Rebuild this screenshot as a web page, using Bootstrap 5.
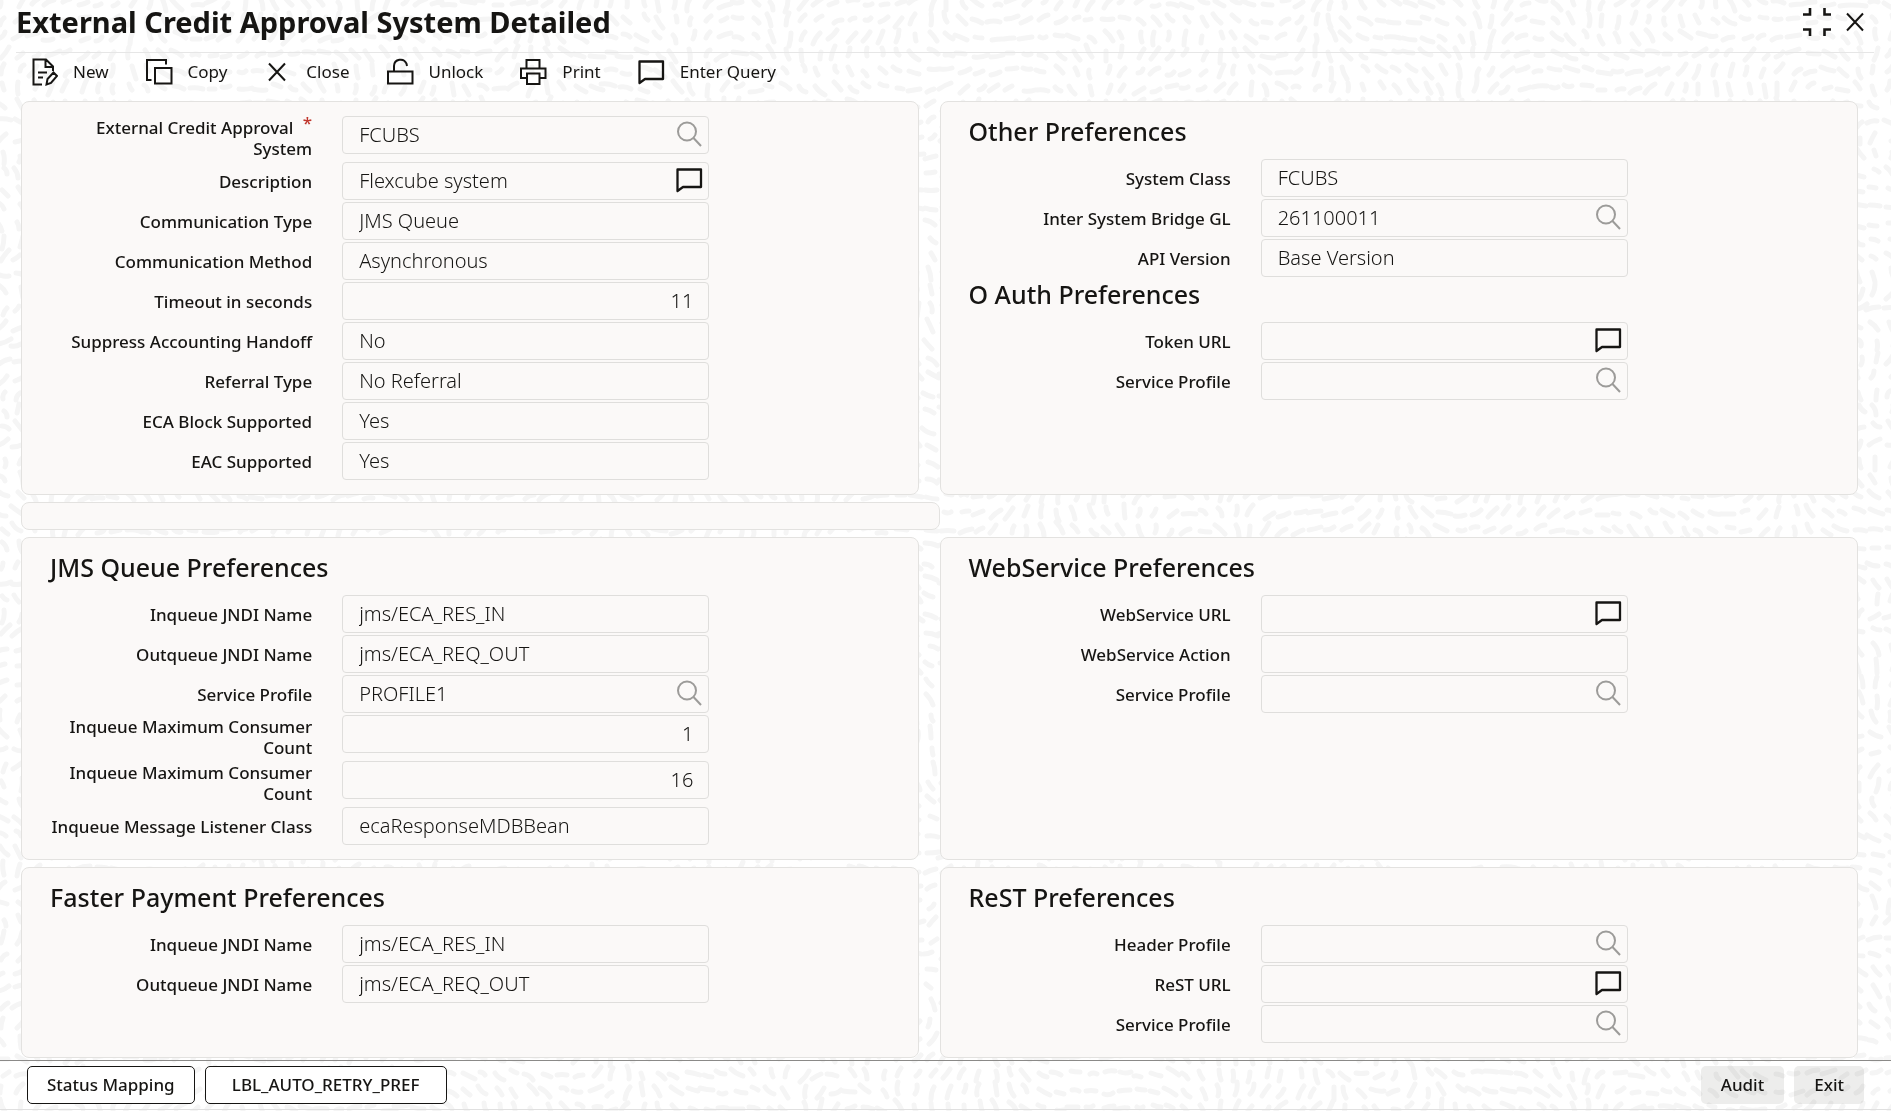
<!DOCTYPE html>
<html lang="en">
<head>
<meta charset="utf-8">
<meta name="viewport" content="width=device-width, initial-scale=1">
<title>External Credit Approval System Detailed</title>
<link href="https://cdn.jsdelivr.net/npm/bootstrap@5.3.0/dist/css/bootstrap.min.css" rel="stylesheet">
<style>
  :root { --ink: #161513; --edge: #e3e2e0; --panel: #fbf9f8; }
  body { font-family: "Noto Sans", "Open Sans", sans-serif; font-size: 17px; font-weight: 500; line-height: 21px; color: var(--ink); background: #fff; }
  .backdrop { position: fixed; top: 0; left: 0; width: 100%; height: 100%; z-index: -1; }
  .ico { width: 28px; height: 28px; fill: none; stroke: currentColor; stroke-width: 2; flex: none; display: block; }
  .bare { border: 0; background: none; padding: 0; color: inherit; }
  .screen-head { height: 53px; margin: 0 17px 0 16px; border-bottom: 1px solid #e6e6e6; padding-bottom: 8px; }
  .screen-head h1 { font-size: 29px; font-weight: 700; line-height: 36px; margin: 0; }
  .window-tools { gap: 10px; padding-right: 5px; }
  .tools { height: 37px; margin: 0 30px 11px; gap: 36px; }
  .tools .bare { display: flex; align-items: center; gap: 15px; }
  .content-area { padding: 0 33px 0 21px; }
  .band { margin-bottom: 7px; }
  .band:last-child { margin-bottom: 0; }
  .panel-box { height: 100%; background: var(--panel); border: 1px solid var(--edge); border-radius: 8px; padding: 14px 0 12px; }
  .panel-box.inset { margin-right: 21px; }
  .panel-box h2 { font-size: 25px; font-weight: 480; line-height: 30px; margin: 0 28px 13px; }
  .panel-strip { height: 28px; padding: 0; }
  .field-line { display: grid; grid-template-columns: 320fr 367fr 229fr; padding-bottom: 2px; align-items: start; }
  .inset .field-line { grid-template-columns: 320fr 367fr 208fr; }
  .field-line label { display: flex; align-items: center; justify-content: flex-end; min-height: 38px; padding: 1px 30px 1px 24px; text-align: right; }
  .req { color: #c0362c; padding-left: 5px; position: relative; top: -5px; }
  .field-box { position: relative; }
  .field-box .form-control { height: 38px; border: 1px solid #dfdedc; border-radius: 4px; background: transparent; padding: 0 16px 1px; font-size: 20px; font-weight: 350; line-height: 26px; color: var(--ink); }
  .field-box .num { text-align: right; padding-right: 15px; }
  .field-box .bare { position: absolute; right: 6px; top: 4px; }
  .find { color: #9c9b99; }
  .foot { margin-top: auto; margin-bottom: 1px; border-top: 1px solid #8b8a88; border-bottom: 1px solid #e0e0e0; padding: 5px 27px; }
  .foot-group { gap: 10px; }
  .foot .btn { height: 38px; padding: 0 19px 2px; font-size: 17px; font-weight: 500; line-height: 21px; border-radius: 5px; color: var(--ink); }
  .btn-line { border: 1px solid var(--ink); background: #fff; }
  .foot .btn-wide { min-width: 242px; }
  .foot .btn-soft { border: 0; padding: 0 20px 2px; background: rgba(22,21,19,.08); }
</style>
</head>
<body class="d-flex flex-column min-vh-100">
<svg class="backdrop" aria-hidden="true"><path id="dashes" fill="none" stroke="#f5f5f5" stroke-width="5" stroke-linecap="round"/></svg>
<svg width="0" height="0" class="d-none">
  <symbol id="i-new" viewBox="0 0 28 28"><path d="M12 26.500H3.500V1.500h12.500l7 7V13M15.500 1.500v7.500h7.500M8 14.500h9M8 19.500h5M16.500 26.500l1-5.500 6-6.500 3.500 3.500-6 7z"/></symbol>
  <symbol id="i-copy" viewBox="0 0 28 28"><path d="M6.500 22H2V2h19v4.500M10 10h16.500v15.500H10z"/></symbol>
  <symbol id="i-x" viewBox="0 0 28 28"><path d="M6 5.500l16 17M22 5.500l-16 17"/></symbol>
  <symbol id="i-unlock" viewBox="0 0 28 28"><path d="M2 13.500h24.500v12H2zM8 13.500V8a6.500 6.500 0 0 1 12.500-2.300l.5 2.300"/></symbol>
  <symbol id="i-print" viewBox="0 0 28 28"><path d="M7.500 10V2h13v8M7 20H2V10.500h24.500V20H21M8 15.500h12.500V26H8z"/></symbol>
  <symbol id="i-note" viewBox="0 0 28 28"><path stroke-width="2.300" stroke-linejoin="round" d="M2.500 3.500h23.500v17.500H8L2.500 25z"/></symbol>
  <symbol id="i-find" viewBox="0 0 28 28"><circle cx="12" cy="11.500" r="9"/><path d="M18.500 18l7.500 8"/></symbol>
  <symbol id="i-min" viewBox="0 0 28 28"><path stroke-width="2.600" d="M0 6.500h7V0M28 6.500h-6.500V0M0 21.500h7V28M28 21.500h-6.500V28"/></symbol>
</svg>

<header class="screen-head d-flex align-items-center justify-content-between">
  <h1>External Credit Approval System Detailed</h1>
  <div class="window-tools d-flex align-items-center">
    <button class="bare" type="button" aria-label="Restore"><svg class="ico"><use href="#i-min"/></svg></button>
    <button class="bare" type="button" aria-label="Close window"><svg class="ico"><use href="#i-x"/></svg></button>
  </div>
</header>

<nav class="tools d-flex align-items-center" aria-label="Actions">
  <button class="bare" type="button"><svg class="ico"><use href="#i-new"/></svg>New</button>
  <button class="bare" type="button"><svg class="ico"><use href="#i-copy"/></svg>Copy</button>
  <button class="bare" type="button"><svg class="ico"><use href="#i-x"/></svg>Close</button>
  <button class="bare" type="button"><svg class="ico"><use href="#i-unlock"/></svg>Unlock</button>
  <button class="bare" type="button"><svg class="ico"><use href="#i-print"/></svg>Print</button>
  <button class="bare" type="button"><svg class="ico"><use href="#i-note"/></svg>Enter Query</button>
</nav>

<main class="content-area">
  <div class="row g-0 band">
    <div class="col-6"><section class="panel-box inset">
      <div class="field-line"><label for="sys"><span>External Credit Approval <span class="req">*</span> System</span></label><div class="field-box"><input class="form-control" id="sys" value="FCUBS" readonly><button class="bare find" type="button" aria-label="Search system"><svg class="ico"><use href="#i-find"/></svg></button></div></div>
      <div class="field-line"><label for="desc">Description</label><div class="field-box"><input class="form-control" id="desc" value="Flexcube system" readonly><button class="bare" type="button" aria-label="Show description"><svg class="ico"><use href="#i-note"/></svg></button></div></div>
      <div class="field-line"><label for="ctype">Communication Type</label><div class="field-box"><input class="form-control" id="ctype" value="JMS Queue" readonly></div></div>
      <div class="field-line"><label for="cmeth">Communication Method</label><div class="field-box"><input class="form-control" id="cmeth" value="Asynchronous" readonly></div></div>
      <div class="field-line"><label for="tout">Timeout in seconds</label><div class="field-box"><input class="form-control num" id="tout" value="11" readonly></div></div>
      <div class="field-line"><label for="supp">Suppress Accounting Handoff</label><div class="field-box"><input class="form-control" id="supp" value="No" readonly></div></div>
      <div class="field-line"><label for="ref">Referral Type</label><div class="field-box"><input class="form-control" id="ref" value="No Referral" readonly></div></div>
      <div class="field-line"><label for="eca">ECA Block Supported</label><div class="field-box"><input class="form-control" id="eca" value="Yes" readonly></div></div>
      <div class="field-line"><label for="eac">EAC Supported</label><div class="field-box"><input class="form-control" id="eac" value="Yes" readonly></div></div>
    </section></div>
    <div class="col-6"><section class="panel-box">
      <h2>Other Preferences</h2>
      <div class="field-line"><label for="scls">System Class</label><div class="field-box"><input class="form-control" id="scls" value="FCUBS" readonly></div></div>
      <div class="field-line"><label for="gl">Inter System Bridge GL</label><div class="field-box"><input class="form-control" id="gl" value="261100011" readonly><button class="bare find" type="button" aria-label="Search GL"><svg class="ico"><use href="#i-find"/></svg></button></div></div>
      <div class="field-line"><label for="api">API Version</label><div class="field-box"><input class="form-control" id="api" value="Base Version" readonly></div></div>
      <h2>O Auth Preferences</h2>
      <div class="field-line"><label for="tok">Token URL</label><div class="field-box"><input class="form-control" id="tok" readonly><button class="bare" type="button" aria-label="Show token URL"><svg class="ico"><use href="#i-note"/></svg></button></div></div>
      <div class="field-line"><label for="osp">Service Profile</label><div class="field-box"><input class="form-control" id="osp" readonly><button class="bare find" type="button" aria-label="Search profile"><svg class="ico"><use href="#i-find"/></svg></button></div></div>
    </section></div>
  </div>
  <div class="row g-0 band"><div class="col-6"><div class="panel-box panel-strip"></div></div></div>
  <div class="row g-0 band">
    <div class="col-6"><section class="panel-box inset">
      <h2>JMS Queue Preferences</h2>
      <div class="field-line"><label for="jin">Inqueue JNDI Name</label><div class="field-box"><input class="form-control" id="jin" value="jms/ECA_RES_IN" readonly></div></div>
      <div class="field-line"><label for="jout">Outqueue JNDI Name</label><div class="field-box"><input class="form-control" id="jout" value="jms/ECA_REQ_OUT" readonly></div></div>
      <div class="field-line"><label for="jsp">Service Profile</label><div class="field-box"><input class="form-control" id="jsp" value="PROFILE1" readonly><button class="bare find" type="button" aria-label="Search profile"><svg class="ico"><use href="#i-find"/></svg></button></div></div>
      <div class="field-line"><label for="mx1">Inqueue Maximum Consumer Count</label><div class="field-box"><input class="form-control num" id="mx1" value="1" readonly></div></div>
      <div class="field-line"><label for="mx2">Inqueue Maximum Consumer Count</label><div class="field-box"><input class="form-control num" id="mx2" value="16" readonly></div></div>
      <div class="field-line"><label for="lst">Inqueue Message Listener Class</label><div class="field-box"><input class="form-control" id="lst" value="ecaResponseMDBBean" readonly></div></div>
    </section></div>
    <div class="col-6"><section class="panel-box">
      <h2>WebService Preferences</h2>
      <div class="field-line"><label for="wurl">WebService URL</label><div class="field-box"><input class="form-control" id="wurl" readonly><button class="bare" type="button" aria-label="Show WebService URL"><svg class="ico"><use href="#i-note"/></svg></button></div></div>
      <div class="field-line"><label for="wact">WebService Action</label><div class="field-box"><input class="form-control" id="wact" readonly></div></div>
      <div class="field-line"><label for="wsp">Service Profile</label><div class="field-box"><input class="form-control" id="wsp" readonly><button class="bare find" type="button" aria-label="Search profile"><svg class="ico"><use href="#i-find"/></svg></button></div></div>
    </section></div>
  </div>
  <div class="row g-0 band">
    <div class="col-6"><section class="panel-box inset">
      <h2>Faster Payment Preferences</h2>
      <div class="field-line"><label for="fin">Inqueue JNDI Name</label><div class="field-box"><input class="form-control" id="fin" value="jms/ECA_RES_IN" readonly></div></div>
      <div class="field-line"><label for="fout">Outqueue JNDI Name</label><div class="field-box"><input class="form-control" id="fout" value="jms/ECA_REQ_OUT" readonly></div></div>
    </section></div>
    <div class="col-6"><section class="panel-box">
      <h2>ReST Preferences</h2>
      <div class="field-line"><label for="rhp">Header Profile</label><div class="field-box"><input class="form-control" id="rhp" readonly><button class="bare find" type="button" aria-label="Search header profile"><svg class="ico"><use href="#i-find"/></svg></button></div></div>
      <div class="field-line"><label for="rurl">ReST URL</label><div class="field-box"><input class="form-control" id="rurl" readonly><button class="bare" type="button" aria-label="Show ReST URL"><svg class="ico"><use href="#i-note"/></svg></button></div></div>
      <div class="field-line"><label for="rsp">Service Profile</label><div class="field-box"><input class="form-control" id="rsp" readonly><button class="bare find" type="button" aria-label="Search profile"><svg class="ico"><use href="#i-find"/></svg></button></div></div>
    </section></div>
  </div>
</main>

<footer class="foot d-flex justify-content-between">
  <div class="foot-group d-flex">
    <button class="btn btn-line" type="button">Status Mapping</button>
    <button class="btn btn-line btn-wide" type="button">LBL_AUTO_RETRY_PREF</button>
  </div>
  <div class="foot-group d-flex">
    <button class="btn btn-soft" type="button">Audit</button>
    <button class="btn btn-soft" type="button">Exit</button>
  </div>
</footer>

<script src="https://cdn.jsdelivr.net/npm/bootstrap@5.3.0/dist/js/bootstrap.bundle.min.js"></script>
<script>
  // Backdrop texture: short rounded strokes that follow a slowly turning direction.
  (function () {
    var seed = 11, d = '';
    function rnd() { seed = (seed * 16807) % 2147483647; return seed / 2147483647; }
    for (var y = 0; y < window.innerHeight + 20; y += 17) {
      for (var x = 0; x < window.innerWidth + 20; x += 16) {
        var px = x + rnd() * 6, py = y + rnd() * 6;
        var a = 1.6 * Math.sin(px / 61 + Math.sin(py / 47)) + 1.5 * Math.cos(py / 53 - px / 140);
        var l = 3 + rnd() * 4, c = Math.cos(a), s = Math.sin(a), b = (rnd() - 0.5) * 4;
        d += 'M' + Math.round(px - c * l) + ' ' + Math.round(py - s * l) +
             'Q' + Math.round(px - s * b) + ' ' + Math.round(py + c * b) + ' ' +
             Math.round(px + c * l) + ' ' + Math.round(py + s * l);
      }
    }
    document.getElementById('dashes').setAttribute('d', d);
  })();
</script>
</body>
</html>
